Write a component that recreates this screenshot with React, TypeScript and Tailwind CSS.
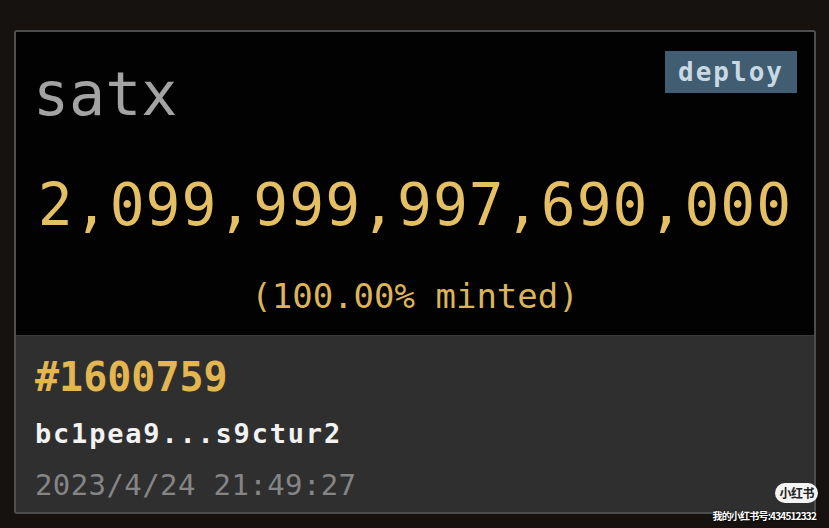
const mono = "font-['DejaVu_Sans_Mono','Liberation_Mono',monospace]";

export default function App() {
  return (
    <div className="relative h-[528px] w-[829px] overflow-hidden bg-[#15120f] pl-[14px] pt-[30px]">
      <div className="w-[802px] overflow-hidden rounded-[3px] border-2 border-[#4e4e4e]">
        <div className={`flex h-[303px] flex-col bg-[#020202] px-[17px] ${mono}`}>
          <div className="flex items-start justify-between pt-[19px]">
            <span className="mt-[13px] text-[60px] leading-none text-[#a3a3a3]">satx</span>
            <span className="flex h-[42px] w-[132px] items-center justify-center bg-[#415d72] text-[26px] font-bold leading-none tracking-[2px] text-[#c9d9e4]">
              deploy
            </span>
          </div>
          <div className="mt-[52px] text-center text-[58px] leading-none tracking-[1px] text-[#e5bf63]">
            2,099,999,997,690,000
          </div>
          <div className="mt-[45px] text-center text-[34px] leading-none text-[#dcb45a]">
            (100.00% minted)
          </div>
        </div>
        <div className={`flex h-[177px] flex-col border-t border-[#3a3a3a] bg-[#2f2f2f] px-[19px] pt-[21px] ${mono}`}>
          <span className="text-[40px] font-bold leading-none text-[#e3b64f]">#1600759</span>
          <span className="mt-[23px] text-[27px] font-bold leading-none tracking-[1.8px] text-[#f2f2f2]">
            bc1pea9...s9ctur2
          </span>
          <span className="mt-[24px] text-[29px] leading-none tracking-[0.4px] text-[#858585]">
            2023/4/24 21:49:27
          </span>
        </div>
      </div>

      <div className="absolute right-[11px] top-[483px] flex h-[20px] items-center rounded-full bg-[#f4f4f4] px-[4px] font-['Noto_Sans_CJK_SC',sans-serif] text-[12px] font-bold leading-none tracking-[-0.5px] text-[#222]">
        小红书
      </div>
      <div className="absolute right-[13px] top-[509px] font-['Noto_Sans_CJK_SC',sans-serif] text-[10px] font-bold leading-[13px] tracking-[-0.8px] text-white [text-shadow:0_0_2px_#000]">
        我的小红书号:434512332
      </div>
    </div>
  );
}
